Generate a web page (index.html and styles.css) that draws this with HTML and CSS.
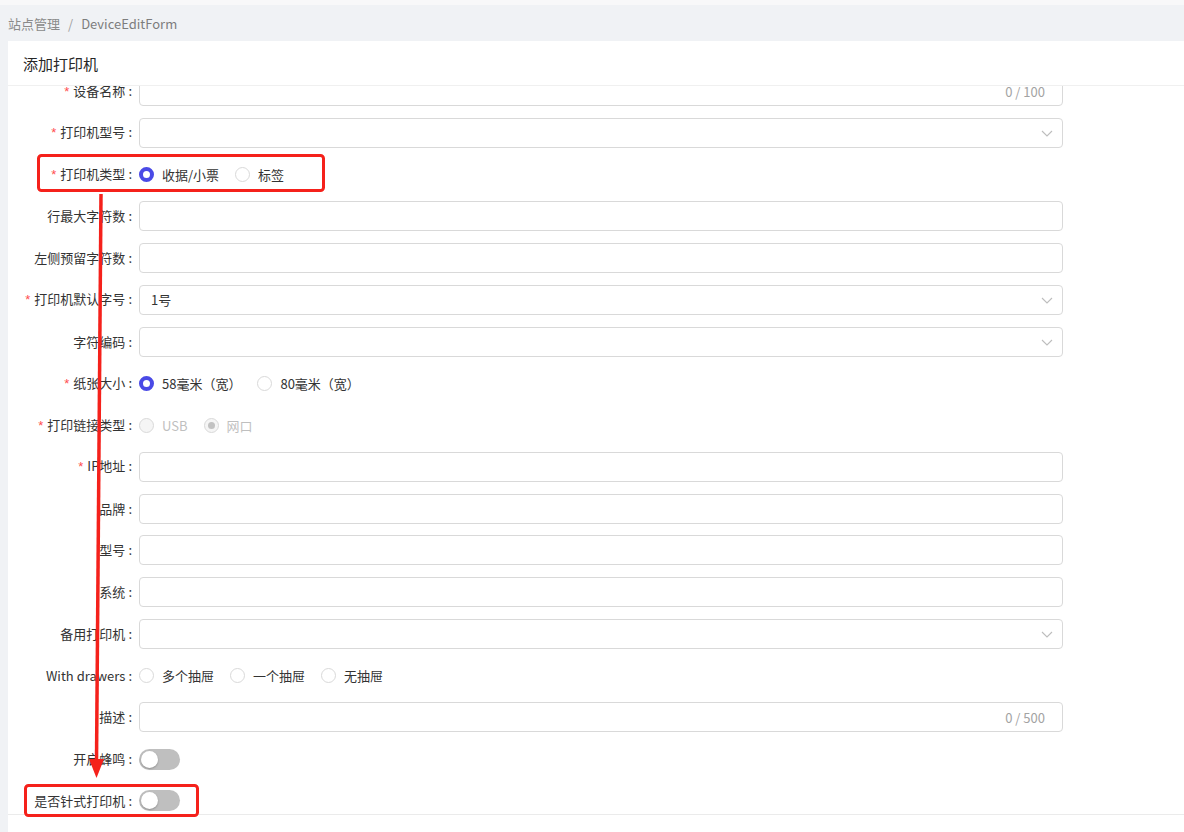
FILE: index.html
```html
<!DOCTYPE html>
<html>
<head>
  <meta charset="utf-8">
  <title>DeviceEditForm</title>
  <link rel="stylesheet" href="styles.css">
</head>
<body>

<div class="top-strip"></div>
<div class="breadcrumb">
  <span>站点管理</span>
  <span class="sep">/</span>
  <span class="current">DeviceEditForm</span>
</div>

<div class="card">
  <div class="card-header">添加打印机</div>
  <div class="card-body">
    <div class="form">

      <div class="row">
        <div class="label"><span class="req">*</span>设备名称<span class="colon">:</span></div>
        <div class="control"><div class="input right-count"><span class="count">0 / 100</span></div></div>
      </div>

      <div class="row">
        <div class="label"><span class="req">*</span>打印机型号<span class="colon">:</span></div>
        <div class="control"><div class="input select"><span></span><svg class="chevron" width="12" height="12" viewBox="0 0 12 12"><path d="M1 4 L6 9 L11 4" /></svg></div></div>
      </div>

      <div class="row">
        <div class="label"><span class="req">*</span>打印机类型<span class="colon">:</span></div>
        <div class="control radios">
          <label class="radio"><span class="dot checked"></span><span class="text">收据/小票</span></label>
          <label class="radio"><span class="dot"></span><span class="text">标签</span></label>
        </div>
      </div>

      <div class="row">
        <div class="label">行最大字符数<span class="colon">:</span></div>
        <div class="control"><div class="input"></div></div>
      </div>

      <div class="row">
        <div class="label">左侧预留字符数<span class="colon">:</span></div>
        <div class="control"><div class="input"></div></div>
      </div>

      <div class="row">
        <div class="label"><span class="req">*</span>打印机默认字号<span class="colon">:</span></div>
        <div class="control"><div class="input select"><span>1号</span><svg class="chevron" width="12" height="12" viewBox="0 0 12 12"><path d="M1 4 L6 9 L11 4" /></svg></div></div>
      </div>

      <div class="row">
        <div class="label">字符编码<span class="colon">:</span></div>
        <div class="control"><div class="input select"><span></span><svg class="chevron" width="12" height="12" viewBox="0 0 12 12"><path d="M1 4 L6 9 L11 4" /></svg></div></div>
      </div>

      <div class="row">
        <div class="label"><span class="req">*</span>纸张大小<span class="colon">:</span></div>
        <div class="control radios">
          <label class="radio"><span class="dot checked"></span><span class="text">58毫米（宽）</span></label>
          <label class="radio"><span class="dot"></span><span class="text">80毫米（宽）</span></label>
        </div>
      </div>

      <div class="row">
        <div class="label"><span class="req">*</span>打印链接类型<span class="colon">:</span></div>
        <div class="control radios">
          <label class="radio disabled"><span class="dot"></span><span class="text">USB</span></label>
          <label class="radio disabled"><span class="dot checked"></span><span class="text">网口</span></label>
        </div>
      </div>

      <div class="row">
        <div class="label"><span class="req">*</span>IP地址<span class="colon">:</span></div>
        <div class="control"><div class="input"></div></div>
      </div>

      <div class="row">
        <div class="label">品牌<span class="colon">:</span></div>
        <div class="control"><div class="input"></div></div>
      </div>

      <div class="row">
        <div class="label">型号<span class="colon">:</span></div>
        <div class="control"><div class="input"></div></div>
      </div>

      <div class="row">
        <div class="label">系统<span class="colon">:</span></div>
        <div class="control"><div class="input"></div></div>
      </div>

      <div class="row">
        <div class="label">备用打印机<span class="colon">:</span></div>
        <div class="control"><div class="input select"><span></span><svg class="chevron" width="12" height="12" viewBox="0 0 12 12"><path d="M1 4 L6 9 L11 4" /></svg></div></div>
      </div>

      <div class="row">
        <div class="label">With drawers<span class="colon">:</span></div>
        <div class="control radios">
          <label class="radio"><span class="dot"></span><span class="text">多个抽屉</span></label>
          <label class="radio"><span class="dot"></span><span class="text">一个抽屉</span></label>
          <label class="radio"><span class="dot"></span><span class="text">无抽屉</span></label>
        </div>
      </div>

      <div class="row">
        <div class="label">描述<span class="colon">:</span></div>
        <div class="control"><div class="input right-count"><span class="count">0 / 500</span></div></div>
      </div>

      <div class="row">
        <div class="label">开启蜂鸣<span class="colon">:</span></div>
        <div class="control"><span class="switch"><span class="knob"></span></span></div>
      </div>

      <div class="row">
        <div class="label">是否针式打印机<span class="colon">:</span></div>
        <div class="control"><span class="switch"><span class="knob"></span></span></div>
      </div>

    </div>
  </div>
</div>

<!-- red annotation marks drawn over the screenshot -->
<svg class="marks" width="1184" height="832" viewBox="0 0 1184 832">
  <rect x="38.5" y="155.5" width="285" height="35" rx="3" />
  <rect x="25.5" y="785.5" width="172" height="30" rx="3" />
  <line x1="101" y1="194" x2="96.5" y2="762" />
  <polygon points="89,759 104,759 96.5,778" />
</svg>

</body>
</html>
```

FILE: styles.css
```css
/* page frame */
body {
  margin: 0;
  background: #f0f2f5;
  font-family: "Noto Sans CJK SC", "Noto Sans", sans-serif;
  font-size: 13px;
  color: #333;
}
.top-strip {
  height: 5px;
  background: #f8f8f9;
}
.breadcrumb {
  height: 36px;
  display: flex;
  align-items: center;
  padding-left: 8px;
  color: #8a8a8a;
  line-height: 1;
}
.breadcrumb .sep {
  margin: 0 8px;
  color: #a0a0a0;
}
.breadcrumb .current {
  color: #7d7d7d;
}

/* card */
.card {
  margin-left: 8px;
  height: 791px;
  background: #fff;
}
.card-header {
  height: 44px;
  display: flex;
  align-items: center;
  padding-left: 15px;
  border-bottom: 1px solid #f0f0f0;
  font-size: 15px;
  color: #262626;
}
.card-body {
  height: 728px;
  overflow: hidden;
  border-bottom: 1px solid #ebebeb;
}
.form {
  margin-top: -10px;
}

/* form rows */
.row {
  display: flex;
  align-items: center;
  height: 30px;
  margin-bottom: 11.75px;
}
.label {
  width: 124px;
  flex-shrink: 0;
  text-align: right;
  white-space: nowrap;
  line-height: 30px;
}
.label .req {
  color: #ff4d4f;
  margin-right: 4px;
  font-family: "Liberation Sans", sans-serif;
}
.label .colon {
  margin-left: 3px;
}
.control {
  flex: 1;
  margin-left: 7px;
  margin-right: 121px;
  display: flex;
  align-items: center;
}
.input {
  flex: 1;
  height: 30px;
  box-sizing: border-box;
  border: 1px solid #d9d9d9;
  border-radius: 4px;
  padding: 0 11px;
  display: flex;
  align-items: center;
  justify-content: space-between;
  color: #333;
}
.input.right-count {
  justify-content: flex-end;
  padding-right: 17px;
}
.count {
  color: #a3a3a3;
}
.chevron {
  margin-right: -2px;
}
.chevron path {
  fill: none;
  stroke: #bdbdbd;
  stroke-width: 1.1;
}

/* radios */
.radio {
  display: flex;
  align-items: center;
  margin-right: 8px;
  white-space: nowrap;
}
.radio .dot {
  width: 15px;
  height: 15px;
  box-sizing: border-box;
  border: 1px solid #d9d9d9;
  border-radius: 50%;
  background: #fff;
}
.radio .dot.checked {
  border: 4.5px solid #4a4ae6;
}
.radio .text {
  padding: 0 8px;
}
.radio.disabled .dot {
  background: #f5f5f5;
  border: 1px solid #d9d9d9;
  display: flex;
  align-items: center;
  justify-content: center;
}
.radio.disabled .dot.checked::after {
  content: "";
  width: 7px;
  height: 7px;
  border-radius: 50%;
  background: #c2c2c2;
}
.radio.disabled .text {
  color: #bfbfbf;
}

/* switch */
.switch {
  width: 41px;
  height: 21px;
  box-sizing: border-box;
  padding: 2px;
  border-radius: 11px;
  background: #bfbfbf;
  display: flex;
  align-items: center;
}
.switch .knob {
  width: 17px;
  height: 17px;
  border-radius: 50%;
  background: #fff;
  box-shadow: 0 1px 2px rgba(0, 0, 0, 0.25);
}

/* annotation overlay */
.marks {
  position: absolute;
  top: 0;
  left: 0;
  pointer-events: none;
}
.marks rect {
  fill: none;
  stroke: #f5211b;
  stroke-width: 3;
}
.marks line {
  stroke: #f5211b;
  stroke-width: 3.5;
}
.marks polygon {
  fill: #f5211b;
}
```
